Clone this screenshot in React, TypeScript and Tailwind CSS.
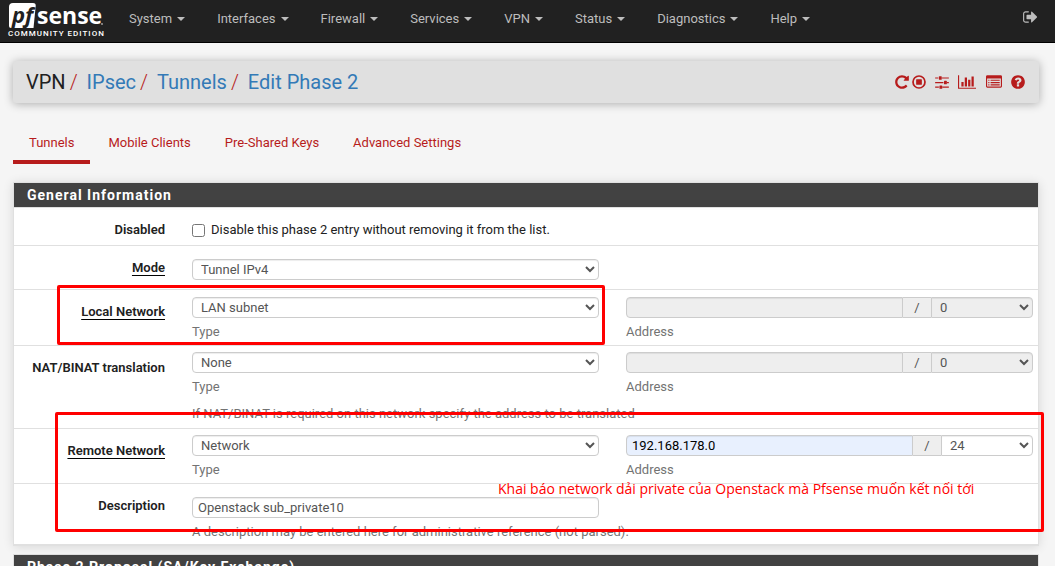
import type { ReactNode } from "react";

const menus = ["System", "Interfaces", "Firewall", "Services", "VPN", "Status", "Diagnostics", "Help"];
const tabs = ["Tunnels", "Mobile Clients", "Pre-Shared Keys", "Advanced Settings"];

const fieldBase =
  "h-[21px] min-w-0 border border-[#ccc] text-[13px] leading-[18px] text-[#555] shadow-[inset_0_1px_1px_rgba(0,0,0,0.075)]";

function Logo() {
  return (
    <a href="#" className="flex w-[96px] flex-col" aria-label="pfSense Community Edition">
      <svg viewBox="0 0 96 26" className="block h-[26px] w-[96px] overflow-visible">
        <path d="M5 0H25Q28 0 27.700 3L25.500 25H3Q1 25 1 23V4Q1 0 5 0Z" fill="#fff" />
        <text x="4" y="20" fontSize="22" fontWeight="700" fontStyle="italic" fill="#212121" fontFamily="'Open Sans', sans-serif">
          pf
        </text>
        <text x="29" y="21" fontSize="23" fontWeight="700" fill="#fff" fontFamily="'Open Sans', sans-serif">
          sense
        </text>
        <circle cx="94" cy="21" r="0.900" fill="#aaa" />
      </svg>
      <span className="text-[8px] leading-[10px] font-medium tracking-[1px] whitespace-nowrap text-white">COMMUNITY EDITION</span>
    </a>
  );
}

function Icon({ label, box, className, children }: { label: string; box: string; className: string; children: ReactNode }) {
  return (
    <a href="#" aria-label={label} className="block">
      <svg viewBox={box} fill="currentColor" className={className}>
        {children}
      </svg>
    </a>
  );
}

function PageActions() {
  return (
    <div className="flex items-center text-[#b71c1c]">
      <Icon label="Restart service" box="128 0 1536 1792" className="h-4 w-[14px]">
        <path d="M1664 256v448q0 26-19 45t-45 19h-448q-42 0-59-40-17-39 14-69l138-138q-148-137-349-137-104 0-198.500 40.500t-163.500 109.500-109.500 163.500-40.500 198.500 40.500 198.500 109.500 163.500 163.500 109.500 198.500 40.500q119 0 225-52t179-147q7-10 23-12 15 0 25 9l137 138q9 8 9.500 20.500t-7.500 22.500q-109 132-264 204.500t-327 72.500q-156 0-298-61t-245-164-164-245-61-298 61-298 164-245 245-164 298-61q147 0 284.500 55.500t244.500 156.500l130-129q29-31 70-14 39 17 39 59z" />
      </Icon>
      <span className="w-[3px]" />
      <Icon label="Stop service" box="128 0 1536 1792" className="h-4 w-[14px]">
        <circle cx="896" cy="896" r="672" fill="none" stroke="currentColor" strokeWidth="192" />
        <rect x="576" y="576" width="640" height="640" rx="64" />
      </Icon>
      <span className="w-[9px]" />
      <Icon label="Settings" box="128 0 1536 1792" className="h-4 w-[14px]">
        <path d="M128 384h352v128h-352zM864 384h800v128h-800zM128 896h928v128h-928zM1440 896h224v128h-224zM128 1408h416v128h-416zM928 1408h736v128h-736z" />
        <rect x="544" y="256" width="320" height="384" rx="64" />
        <rect x="1120" y="768" width="320" height="384" rx="64" />
        <rect x="608" y="1280" width="320" height="384" rx="64" />
      </Icon>
      <span className="w-[9px]" />
      <Icon label="Status" box="0 0 2048 1792" className="h-4 w-[18px]">
        <path d="M640 896v512h-256v-512h256zm384-512v1024h-256v-1024h256zm1024 1152v128h-2048v-1536h128v1408h1920zm-640-896v768h-256v-768h256zm384-384v1152h-256v-1152h256z" />
      </Icon>
      <span className="w-[10px]" />
      <Icon label="Logs" box="0 0 1792 1792" className="h-4 w-4">
        <path fillRule="evenodd" d="M160 128h1472q160 0 160 160v1088q0 160-160 160h-1472q-160 0-160-160v-1088q0-160 160-160zM128 512v864q0 32 32 32h1472q32 0 32-32v-864z" />
        <path d="M256 640h128v128h-128zM512 640h1024v128h-1024zM256 896h128v128h-128zM512 896h1024v128h-1024zM256 1152h128v128h-128zM512 1152h1024v128h-1024z" />
      </Icon>
      <span className="w-[9px]" />
      <Icon label="Help" box="128 0 1536 1792" className="h-4 w-[14px]">
        <path d="M1024 1376v-192q0-14-9-23t-23-9h-192q-14 0-23 9t-9 23v192q0 14 9 23t23 9h192q14 0 23-9t9-23zm256-672q0-88-55.500-163t-138.500-116-170-41q-243 0-371 213-15 24 8 42l132 100q7 6 19 6 16 0 25-12 53-68 86-92 34-24 86-24 48 0 85.500 26t37.500 59q0 38-20 61t-68 45q-63 28-115.500 86.500t-52.500 125.500v36q0 14 9 23t23 9h192q14 0 23-9t9-23q0-19 21.500-49.500t54.500-49.500q32-18 49-28.500t46-35 44.500-48 28-60.500 12.500-81zm384 192q0 209-103 385.500t-279.500 279.500-385.500 103-385.500-103-279.500-279.500-103-385.500 103-385.500 279.500-279.500 385.500-103 385.500 103 279.500 279.500 103 385.500z" />
      </Icon>
    </div>
  );
}

function Row({ label, htmlFor, required, className, children }: { label: string; htmlFor: string; required?: boolean; className: string; children: ReactNode }) {
  return (
    <div className="grid grid-cols-[151px_1fr_1fr] gap-x-[27px] border-b border-[#e0e0e0] pr-[5px]">
      <label htmlFor={htmlFor} className="pt-[13px] text-right leading-[18px] font-semibold whitespace-nowrap">
        <span className={required ? "underline decoration-black decoration-1 underline-offset-[3px]" : ""}>{label}</span>
      </label>
      <div className={`col-span-2 grid grid-cols-2 gap-x-[27px] ${className}`}>{children}</div>
    </div>
  );
}

function TypeSelect({ id, value }: { id: string; value: string }) {
  return (
    <div className="flex flex-col">
      <select id={id} className={`${fieldBase} w-full rounded-[4px] bg-white pl-1`}>
        <option>{value}</option>
      </select>
      <label htmlFor={id} className="mt-[5px] leading-[18px] text-[#737373]">Type</label>
    </div>
  );
}

function AddressGroup({ id, address, mask }: { id: string; address?: string; mask: string }) {
  const filled = address !== undefined;
  return (
    <div className="flex flex-col">
      <div className="flex">
        <input
          id={id}
          type="text"
          disabled={!filled}
          defaultValue={address}
          className={`${fieldBase} flex-1 rounded-l-[4px] px-[5px] ${filled ? "bg-[#e8f0fe] text-black" : "bg-[#eee]"}`}
        />
        <span className="h-[21px] w-[28px] border-y border-[#ccc] bg-[#eee] text-center leading-[19px] text-[#555]">/</span>
        <select
          aria-label="Subnet mask"
          disabled={!filled}
          className={`${fieldBase} rounded-r-[4px] pl-1 opacity-100 ${filled ? "w-[92px] bg-white" : "w-[102px] bg-[#eee]"}`}
        >
          <option>{mask}</option>
        </select>
      </div>
      <label htmlFor={id} className="mt-[5px] leading-[18px] text-[#737373]">Address</label>
    </div>
  );
}

function PanelHeading({ children }: { children: ReactNode }) {
  return (
    <h2 className="bg-[#424242] px-[13px] py-[3px] text-[14px] leading-[18px] font-bold tracking-[1px] text-white">{children}</h2>
  );
}

export default function App() {
  return (
    <div className="h-screen overflow-hidden bg-[#f5f5f5] font-['Roboto',sans-serif] text-[13px] leading-[18px] text-[#212121]">
      <nav className="flex h-[43px] items-start justify-between border-b border-black bg-[#212121] pr-[17px] pl-[8px]">
        <div className="flex items-start">
          <div className="pt-[3px]">
            <Logo />
          </div>
          <div className="flex gap-[32px] pt-[10px] pl-[25px]">
            {menus.map((name) => (
              <button key={name} type="button" className="flex items-center gap-[5px] leading-[18px] text-[#bdbdbd]">
                {name}
                <span className="border-x-4 border-t-4 border-x-transparent border-t-[#bdbdbd]" />
              </button>
            ))}
          </div>
        </div>
        <a href="#" aria-label="Log out" className="block pt-[9px] text-[#bdbdbd]">
          <svg viewBox="64 0 1664 1792" fill="currentColor" className="h-4 w-[15px]">
            <path d="M704 1440q0 4 1 20t.5 26.500-3 23.500-10 19.500-20.500 6.500h-320q-119 0-203.500-84.500t-84.500-203.500v-704q0-119 84.500-203.500t203.500-84.500h320q13 0 22.500 9.500t9.500 22.500q0 4 1 20t.5 26.500-3 23.500-10 19.500-20.500 6.500h-320q-66 0-113 47t-47 113v704q0 66 47 113t113 47h312l11.500 1 11.500 3 8 5.500 7 9 2 13.500zm928-544q0 26-19 45l-544 544q-19 19-45 19t-45-19-19-45v-288h-448q-26 0-45-19t-19-45v-384q0-26 19-45t45-19h448v-288q0-26 19-45t45-19 45 19l544 544q19 19 19 45z" />
          </svg>
        </a>
      </nav>

      <main className="pt-[18px] pr-4 pl-[13px]">
        <header className="flex h-[42px] items-center justify-between rounded-[3px] bg-[#e0e0e0] pr-[14px] pl-[13px] shadow-[0_1px_10px_rgba(0,0,0,0.3)]">
          <ol className="flex text-[20px] leading-[24px]">
            <li>VPN</li>
            {["IPsec", "Tunnels", "Edit Phase 2"].map((name) => (
              <li key={name} className="flex">
                <span className="pr-[9px] pl-[4px] font-light text-[#b71c1c]">/</span>
                <a href="#" className="text-[#337ab7]">{name}</a>
              </li>
            ))}
          </ol>
          <PageActions />
        </header>

        <ul className="mt-[22px] flex gap-[2px]">
          {tabs.map((name, i) => (
            <li key={name}>
              <a
                href="#"
                className={`block border-b-4 px-4 pt-[9px] pb-[8px] leading-[18px] text-[#b71c1c] ${i === 0 ? "border-[#b71c1c]" : "border-transparent"}`}
              >
                {name}
              </a>
            </li>
          ))}
        </ul>

        <section className="relative mt-[18px] border border-[#e0e0e0] bg-white shadow-[0_1px_10px_rgba(0,0,0,0.12)]">
          <PanelHeading>General Information</PanelHeading>
          <div className="border-t border-[#e0e0e0]">
            <Row label="Disabled" htmlFor="disabled" className="pt-[13px] pb-[6px]">
              <label className="col-span-2 flex items-center gap-[6px] leading-[18px]">
                <input id="disabled" type="checkbox" className="m-0 h-[13px] w-[13px]" />
                Disable this phase 2 entry without removing it from the list.
              </label>
            </Row>
            <Row label="Mode" htmlFor="mode" required className="pt-[13px] pb-[9px]">
              <select id="mode" className={`${fieldBase} w-full rounded-[4px] bg-white pl-1`}>
                <option>Tunnel IPv4</option>
              </select>
            </Row>
            <Row label="Local Network" htmlFor="local-type" required className="pt-[7px] pb-[4px]">
              <TypeSelect id="local-type" value="LAN subnet" />
              <AddressGroup id="local-address" mask="0" />
            </Row>
            <Row label="NAT/BINAT translation" htmlFor="nat-type" className="pt-[6px] pb-[5px]">
              <TypeSelect id="nat-type" value="None" />
              <AddressGroup id="nat-address" mask="0" />
              <p className="col-span-2 mt-[9px] leading-[18px] text-[#737373]">
                If NAT/BINAT is required on this network specify the address to be translated
              </p>
            </Row>
            <Row label="Remote Network" htmlFor="remote-type" required className="pt-[6px] pb-[4px]">
              <TypeSelect id="remote-type" value="Network" />
              <AddressGroup id="remote-address" address="192.168.178.0" mask="24" />
            </Row>
            <Row label="Description" htmlFor="description" className="pt-[13px] pb-[3px]">
              <input
                id="description"
                type="text"
                defaultValue="Openstack sub_private10"
                className={`${fieldBase} w-full rounded-[4px] bg-white px-[5px]`}
              />
              <p className="col-span-2 mt-[5px] leading-[18px] text-[#737373]">
                A description may be entered here for administrative reference (not parsed).
              </p>
            </Row>
          </div>

          <div className="pointer-events-none absolute top-[102px] right-[433px] left-[43px] h-[60px] rounded-[2px] border-3 border-[#f00]" />
          <div className="pointer-events-none absolute top-[229px] right-[-6px] left-[41px] h-[120px] rounded-[2px] border-3 border-[#f00]" />
          <p className="pointer-events-none absolute top-[297px] left-[484px] font-['Open_Sans',sans-serif] text-[14px] leading-[18px] whitespace-nowrap text-[#f00]">
            Khai báo network dải private của Openstack mà Pfsense muốn kết nối tới
          </p>
        </section>

        <section className="mt-2 border border-[#e0e0e0] bg-white">
          <PanelHeading>Phase 2 Proposal (SA/Key Exchange)</PanelHeading>
        </section>
      </main>
    </div>
  );
}
